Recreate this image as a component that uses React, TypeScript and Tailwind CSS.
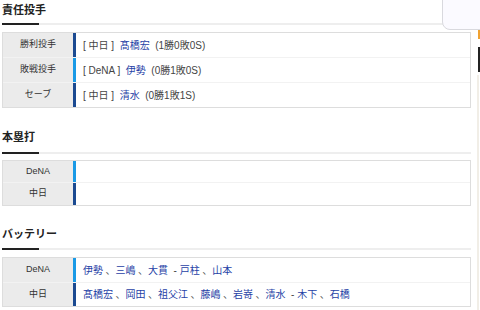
import React from "react";

const font = { fontFamily: '"Liberation Sans", "Noto Sans CJK JP", sans-serif' };

type Team = "dena" | "chunichi";

function Bar({ team }: { team: Team }) {
  return <div className={team === "dena" ? "w-[3px] bg-[#1a9ae6]" : "w-[3px] bg-[#1b4a91]"} />;
}

function Heading({ text, className }: { text: string; className: string }) {
  return (
    <div className={className}>
      <div className="h-[14px] leading-[14px] text-[11px] font-bold text-[#222]">{text}</div>
    </div>
  );
}

function Underline({ className }: { className: string }) {
  return (
    <div className={`flex ${className}`}>
      <div className="w-[37px] h-[2px] bg-[#222]" />
      <div className="flex-1 h-[2px] bg-[#eeeeee]" />
    </div>
  );
}

function Row({
  label,
  team,
  h,
  first,
  children,
}: {
  label: string;
  team: Team;
  h: string;
  first?: boolean;
  children?: React.ReactNode;
}) {
  return (
    <div className={`flex ${h} ${first ? "" : "border-t border-[#f2f2f2]"}`}>
      <div className="w-[70px] bg-[#ebebeb] flex items-center justify-center text-[9px] text-[#333]">
        {label}
      </div>
      <Bar team={team} />
      <div className="flex-1 flex items-center pl-[7px] text-[10px] text-[#444] whitespace-pre">
        {children}
      </div>
    </div>
  );
}

const B = ({ children }: { children: React.ReactNode }) => (
  <span className="text-[#1f3fa6]">{children}</span>
);

const S = () => <span className="ml-[2.5px] text-[#555]">、</span>;

export default function App() {
  return (
    <div className="relative w-[480px] h-[310px] overflow-hidden bg-white flex" style={font}>
      <main className="w-[471px] pl-[2px]">
        <Heading text="責任投手" className="pt-[3px]" />
        <Underline className="mt-[6px]" />
        <div className="mt-[7px] border border-[#dddddd]">
          <Row label="勝利投手" team="chunichi" h="h-[24px]" first>
            {"[ 中日 ]  "}
            <B>髙橋宏</B>
            {"  (1勝0敗0S)"}
          </Row>
          <Row label="敗戦投手" team="dena" h="h-[25px]">
            {"[ DeNA ]  "}
            <B>伊勢</B>
            {"  (0勝1敗0S)"}
          </Row>
          <Row label="セーブ" team="chunichi" h="h-[25px]">
            {"[ 中日 ]  "}
            <B>清水</B>
            {"  (0勝1敗1S)"}
          </Row>
        </div>

        <Heading text="本塁打" className="mt-[22px]" />
        <Underline className="mt-[8px]" />
        <div className="mt-[6px] border border-[#dddddd]">
          <Row label="DeNA" team="dena" h="h-[21px]" first />
          <Row label="中日" team="chunichi" h="h-[23px]" />
        </div>

        <Heading text="バッテリー" className="mt-[21px]" />
        <Underline className="mt-[7px]" />
        <div className="mt-[7px] border border-[#dddddd]">
          <Row label="DeNA" team="dena" h="h-[24px]" first>
            <B>伊勢</B>
            <S />
            <B>三嶋</B>
            <S />
            <B>大貫</B>
            {"  - "}
            <B>戸柱</B>
            <S />
            <B>山本</B>
          </Row>
          <Row label="中日" team="chunichi" h="h-[24px]">
            <B>髙橋宏</B>
            <S />
            <B>岡田</B>
            <S />
            <B>祖父江</B>
            <S />
            <B>藤嶋</B>
            <S />
            <B>岩嵜</B>
            <S />
            <B>清水</B>
            {"  - "}
            <B>木下</B>
            <S />
            <B>石橋</B>
          </Row>
        </div>
      </main>

      <aside className="ml-auto w-[3px] flex flex-col">
        <div className="h-[30px]" />
        <div className="h-[9px] ml-[1px] bg-[#f0a232]" />
        <div className="h-[8px]" />
        <div className="h-[25px] ml-[1px] bg-[#222]" />
        <div className="h-[3px]" />
        <div className="flex-1 w-[2px] bg-[#f1eee7]" />
      </aside>

      <div className="absolute top-[-1px] right-[-8px] w-[46px] h-[31px] bg-[#fbfaff] border border-[#d9d9de] rounded-bl-[8px]" />
    </div>
  );
}
